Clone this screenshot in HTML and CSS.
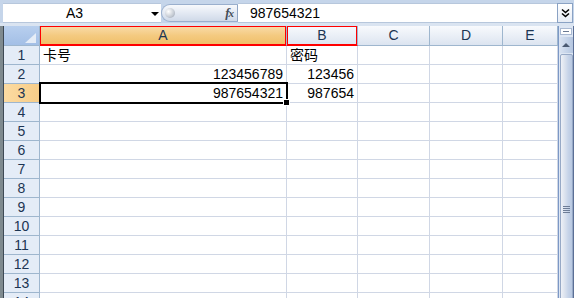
FILE: index.html
```html
<!DOCTYPE html>
<html lang="zh-CN">
<head>
    <meta charset="UTF-8">
    <title>Excel</title>
    <link rel="stylesheet" href="styles.css">
</head>
<body>
    <div class="excel">
        <div class="formula-bar">
            <div class="name-box">
                <span class="name">A3</span>
                <span class="drop"></span>
            </div>
            <div class="fx-pill">
                <span class="knob"></span>
                <span class="fx">f<span class="x">x</span></span>
            </div>
            <div class="formula-input">987654321</div>
            <div class="expand-btn">
                <svg width="9" height="10" viewBox="0 0 9 10">
                    <path d="M1 1.5 L4.5 4.5 L8 1.5 M1 5.5 L4.5 8.5 L8 5.5" fill="none" stroke="#000" stroke-width="1.6"/>
                </svg>
            </div>
        </div>

        <div class="sheet">
            <div class="grid">
                <div class="corner"><span class="tri"></span></div>
                <div class="col-head active">A</div>
                <div class="col-head marked">B</div>
                <div class="col-head">C</div>
                <div class="col-head">D</div>
                <div class="col-head">E</div>

                <div class="row-head">1</div>
                <div class="cell">卡号</div><div class="cell">密码</div><div class="cell"></div><div class="cell"></div><div class="cell"></div>

                <div class="row-head">2</div>
                <div class="cell num">123456789</div><div class="cell num">123456</div><div class="cell"></div><div class="cell"></div><div class="cell"></div>

                <div class="row-head active">3</div>
                <div class="cell num selected">987654321</div><div class="cell num">987654</div><div class="cell"></div><div class="cell"></div><div class="cell"></div>

                <div class="row-head">4</div>
                <div class="cell"></div><div class="cell"></div><div class="cell"></div><div class="cell"></div><div class="cell"></div>
                <div class="row-head">5</div>
                <div class="cell"></div><div class="cell"></div><div class="cell"></div><div class="cell"></div><div class="cell"></div>
                <div class="row-head">6</div>
                <div class="cell"></div><div class="cell"></div><div class="cell"></div><div class="cell"></div><div class="cell"></div>
                <div class="row-head">7</div>
                <div class="cell"></div><div class="cell"></div><div class="cell"></div><div class="cell"></div><div class="cell"></div>
                <div class="row-head">8</div>
                <div class="cell"></div><div class="cell"></div><div class="cell"></div><div class="cell"></div><div class="cell"></div>
                <div class="row-head">9</div>
                <div class="cell"></div><div class="cell"></div><div class="cell"></div><div class="cell"></div><div class="cell"></div>
                <div class="row-head">10</div>
                <div class="cell"></div><div class="cell"></div><div class="cell"></div><div class="cell"></div><div class="cell"></div>
                <div class="row-head">11</div>
                <div class="cell"></div><div class="cell"></div><div class="cell"></div><div class="cell"></div><div class="cell"></div>
                <div class="row-head">12</div>
                <div class="cell"></div><div class="cell"></div><div class="cell"></div><div class="cell"></div><div class="cell"></div>
                <div class="row-head">13</div>
                <div class="cell"></div><div class="cell"></div><div class="cell"></div><div class="cell"></div><div class="cell"></div>
                <div class="row-head">14</div>
                <div class="cell"></div><div class="cell"></div><div class="cell"></div><div class="cell"></div><div class="cell"></div>
            </div>

            <div class="vscroll">
                <div class="split-box"></div>
                <div class="up-btn"><span class="arrow"></span></div>
                <div class="thumb">
                    <span class="grip"></span>
                </div>
            </div>
        </div>
    </div>
</body>
</html>
```

FILE: styles.css
```css
body {
    margin: 0;
    font-family: "Liberation Sans", Arial, "Noto Sans CJK SC", sans-serif;
    font-size: 14px;
    color: #000;
}
.excel {
    width: 574px;
    height: 298px;
    overflow: hidden;
    background: #c5d5ea;
    padding-top: 3px;
    box-sizing: border-box;
}

/* formula bar */
.formula-bar {
    display: flex;
    height: 20px;
    padding-left: 3px;
    border-bottom: 3px solid #dae4f1;
}
.name-box {
    width: 158px;
    background: #fff;
    border-top: 1px solid #b7c7dc;
    border-bottom: 1px solid #b7c7dc;
    box-sizing: border-box;
    display: flex;
    align-items: center;
    position: relative;
}
.name-box .name {
    margin-left: 63px;
    font-size: 14px;
    line-height: 18px;
}
.name-box .drop {
    position: absolute;
    left: 148px;
    top: 8px;
    border-left: 4px solid transparent;
    border-right: 4px solid transparent;
    border-top: 4px solid #000;
}
.fx-pill {
    width: 77px;
    box-sizing: border-box;
    margin: 1px 0;
    border: 1px solid #9aafcd;
    border-right: 1px solid #8ea4c4;
    border-radius: 9px 0 0 9px;
    background: linear-gradient(#f7f9fc, #e3e9f3 50%, #cfd9e8);
    display: flex;
    align-items: center;
    justify-content: space-between;
    padding: 0 4px 0 3px;
}
.knob {
    width: 10px;
    height: 10px;
    border-radius: 50%;
    background: radial-gradient(circle at 35% 35%, #ffffff, #c4cad3 60%, #8d96a5);
}
.fx {
    font-family: "Liberation Serif", serif;
    font-style: italic;
    font-weight: bold;
    font-size: 13px;
    color: #444c58;
    letter-spacing: -1px;
}
.fx .x {
    font-size: 11px;
}
.formula-input {
    width: 319px;
    background: #fff;
    border-top: 1px solid #b7c7dc;
    border-bottom: 1px solid #b7c7dc;
    box-sizing: border-box;
    padding-left: 12px;
    line-height: 18px;
}
.expand-btn {
    width: 16px;
    box-sizing: border-box;
    border: 1px solid #8aa2c4;
    background: linear-gradient(#ffffff, #e6ecf5);
    display: flex;
    align-items: center;
    justify-content: center;
}

/* sheet */
.sheet {
    display: flex;
    padding-left: 3px;
    background: #7f8a8f;
}
.grid {
    display: grid;
    grid-template-columns: 36px 247px 71px 72px 73px 55px;
    grid-template-rows: 20px repeat(14, 19px);
    border-left: 1px solid #3f4a55;
    background: #fff;
}
.grid > div {
    box-sizing: border-box;
}
.corner {
    background: linear-gradient(#b8cfee, #a3bfe6);
    border-right: 1px solid #9eb6ce;
    border-bottom: 1px solid #9eb6ce;
    position: relative;
}
.corner .tri {
    position: absolute;
    right: 3px;
    bottom: 2px;
    border-left: 11px solid transparent;
    border-bottom: 10px solid #e6edf7;
}
.col-head {
    background: linear-gradient(#f8fafd, #e9eef6 55%, #dce4f0);
    border-right: 1px solid #9eb6ce;
    border-bottom: 1px solid #9eb6ce;
    color: #1c3553;
    text-align: center;
    line-height: 19px;
}
.col-head.active {
    background: linear-gradient(#f9dcaa, #f4ca80 50%, #f0bf68);
    box-shadow: inset 0 0 0 1px #f00, -1px 0 0 #f00;
    border-bottom-color: #f00;
}
.col-head.marked {
    box-shadow: inset 0 0 0 1px #f00;
    border-bottom-color: #f00;
}
.row-head {
    background: #e4ecf7;
    border-right: 1px solid #9eb6ce;
    border-bottom: 1px solid #9eb6ce;
    color: #1c3553;
    text-align: center;
    line-height: 19px;
}
.row-head.active {
    background: linear-gradient(to right, #fcdba2, #f7cd88);
}
.cell {
    border-right: 1px solid #d0d7e5;
    border-bottom: 1px solid #d0d7e5;
    padding: 0 3px 0 3px;
    line-height: 18px;
    white-space: nowrap;
}
.cell.num {
    text-align: right;
}
.cell.selected {
    position: relative;
}
.cell.selected::after {
    content: "";
    position: absolute;
    top: -2px;
    left: -1px;
    right: -2px;
    bottom: -2px;
    border: 2px solid #000;
}
.cell.selected::before {
    content: "";
    position: absolute;
    right: -4px;
    bottom: -4px;
    width: 5px;
    height: 5px;
    background: #000;
    border: 1px solid #fff;
    z-index: 1;
}

/* vertical scrollbar */
.vscroll {
    width: 16px;
    box-sizing: border-box;
    border-left: 1px solid #7c98c6;
    border-right: 1px solid #5b6f96;
    background: #dde6f3;
    display: flex;
    flex-direction: column;
    align-items: center;
    padding-top: 2px;
}
.split-box {
    width: 12px;
    height: 7px;
    box-sizing: border-box;
    border: 1px solid #a9b9d2;
    background: #fff;
    position: relative;
}
.split-box::after {
    content: "";
    position: absolute;
    left: 2px;
    right: 2px;
    top: 2px;
    height: 1px;
    background: #6b7a93;
}
.up-btn {
    margin-top: 2px;
    width: 14px;
    height: 16px;
    background: linear-gradient(to right, #dbe4f2, #c3d2e8 60%, #b5c6e0);
    display: flex;
    align-items: center;
    justify-content: center;
}
.up-btn .arrow {
    border-left: 4px solid transparent;
    border-right: 4px solid transparent;
    border-bottom: 4px solid #4b5a72;
}
.thumb {
    margin-top: 1px;
    width: 13px;
    height: 310px;
    box-sizing: border-box;
    border: 1px solid #97a9c6;
    border-radius: 2px;
    background: linear-gradient(to right, #eef1f7, #dbe2ee 35%, #c7d4e9 65%, #b8c8e1);
    display: flex;
    align-items: center;
    justify-content: center;
}
.grip {
    width: 7px;
    height: 7px;
    background: repeating-linear-gradient(#6e7d96 0 1px, transparent 1px 2px);
}
```
